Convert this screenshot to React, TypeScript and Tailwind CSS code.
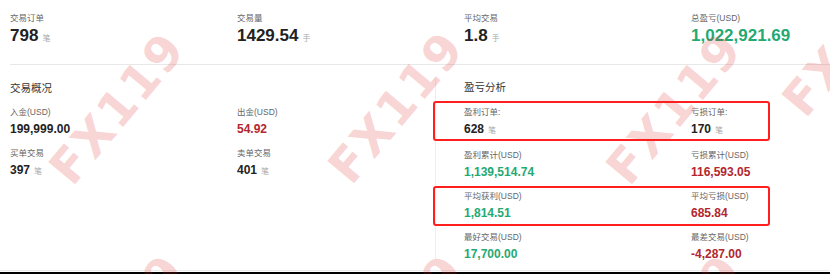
import React from 'react';

type Tone = 'dark' | 'green' | 'red';

interface Item {
  label: string;
  value: string;
  unit?: string;
  tone?: Tone;
}

const toneClass: Record<Tone, string> = {
  dark: 'text-[#222]',
  green: 'text-[#25a972]',
  red: 'text-[#b3262d]',
};

const summary: Item[] = [
  { label: '交易订单', value: '798', unit: '笔' },
  { label: '交易量', value: '1429.54', unit: '手' },
  { label: '平均交易', value: '1.8', unit: '手' },
  { label: '总盈亏(USD)', value: '1,022,921.69', tone: 'green' },
];

const overview: Item[] = [
  { label: '入金(USD)', value: '199,999.00' },
  { label: '出金(USD)', value: '54.92', tone: 'red' },
  { label: '买单交易', value: '397', unit: '笔' },
  { label: '卖单交易', value: '401', unit: '笔' },
];

const pnl: Item[] = [
  { label: '盈利订单:', value: '628', unit: '笔' },
  { label: '亏损订单:', value: '170', unit: '笔' },
  { label: '盈利累计(USD)', value: '1,139,514.74', tone: 'green' },
  { label: '亏损累计(USD)', value: '116,593.05', tone: 'red' },
  { label: '平均获利(USD)', value: '1,814.51', tone: 'green' },
  { label: '平均亏损(USD)', value: '685.84', tone: 'red' },
  { label: '最好交易(USD)', value: '17,700.00', tone: 'green' },
  { label: '最差交易(USD)', value: '-4,287.00', tone: 'red' },
];

// watermark tiles (centre points)
const marks = [
  'left-[117px] top-[108px]',
  'left-[396px] top-[107px]',
  'left-[674px] top-[108px]',
  'left-[850px] top-[40px]',
  'left-[117px] top-[330px]',
  'left-[396px] top-[330px]',
  'left-[674px] top-[330px]',
];

const SmallStat: React.FC<{ item: Item }> = ({ item }) => (
  <div>
    <div className="text-[8.5px] leading-[12px] text-[#666] whitespace-nowrap">{item.label}</div>
    <div className="mt-[3px] flex items-baseline leading-[16px]">
      <span className={`text-[12px] font-bold ${toneClass[item.tone || 'dark']}`}>{item.value}</span>
      {item.unit && <span className="ml-[4px] text-[8px] text-[#aaa]">{item.unit}</span>}
    </div>
  </div>
);

const App: React.FC = () => {
  return (
    <div
      className="relative w-[830px] h-[274px] overflow-hidden bg-white flex flex-col"
      style={{ fontFamily: '"Liberation Sans", "Noto Sans CJK SC", sans-serif' }}
    >
      {/* Summary row */}
      <div className="grid grid-cols-[227px_227px_227px_227px] pl-[10px] pt-[13px]">
        {summary.map((s) => (
          <div key={s.label}>
            <div className="text-[8.5px] leading-[10px] text-[#666]">{s.label}</div>
            <div className="mt-[3px] flex items-baseline leading-[20px]">
              <span className={`text-[17px] font-bold ${toneClass[s.tone || 'dark']}`}>{s.value}</span>
              {s.unit && <span className="ml-[4px] text-[8px] text-[#aaa]">{s.unit}</span>}
            </div>
          </div>
        ))}
      </div>

      <div className="ml-[10px] mt-[15px] h-px bg-[#e8e8e8]" />

      <div className="flex mt-[13px]">
        {/* Left: trade overview */}
        <div className="w-[435px] pl-[10px]">
          <h3 className="pt-[3px] text-[10.5px] leading-[14px] text-[#333]">交易概况</h3>
          <div className="mt-[11px] grid grid-cols-[227px_1fr] gap-y-[10px]">
            {overview.map((it) => (
              <SmallStat key={it.label} item={it} />
            ))}
          </div>
        </div>

        {/* Right: P&L analysis */}
        <div className="relative flex-1 h-[181px] border-l border-[#eeeeee] pl-[28px] pt-[2px]">
          <h3 className="text-[10.5px] leading-[14px] text-[#333]">盈亏分析</h3>
          <div className="mt-[12px] grid grid-cols-[227px_1fr] gap-y-[10px]">
            {pnl.map((it) => (
              <SmallStat key={it.label} item={it} />
            ))}
          </div>
          {/* highlight boxes */}
          <div className="absolute left-[-3px] top-[23px] w-[337px] h-[40px] border-2 border-[#ff1f1f] rounded-[3px]" />
          <div className="absolute left-[-3px] top-[108px] w-[337px] h-[40px] border-2 border-[#ff1f1f] rounded-[3px]" />
        </div>
      </div>

      <div className="mt-auto h-px bg-[#ececec]" />
      <div className="mt-px h-[2px] bg-black" />

      {marks.map((pos) => (
        <span
          key={pos}
          className={`pointer-events-none absolute ${pos} -translate-x-1/2 -translate-y-1/2 -rotate-[50deg] whitespace-nowrap text-[48px] leading-none font-black tracking-[2px] text-[#e02828]/20`}
          style={{ fontFamily: '"DejaVu Sans", sans-serif' }}
        >
          FX119
        </span>
      ))}
    </div>
  );
};

export default App;
